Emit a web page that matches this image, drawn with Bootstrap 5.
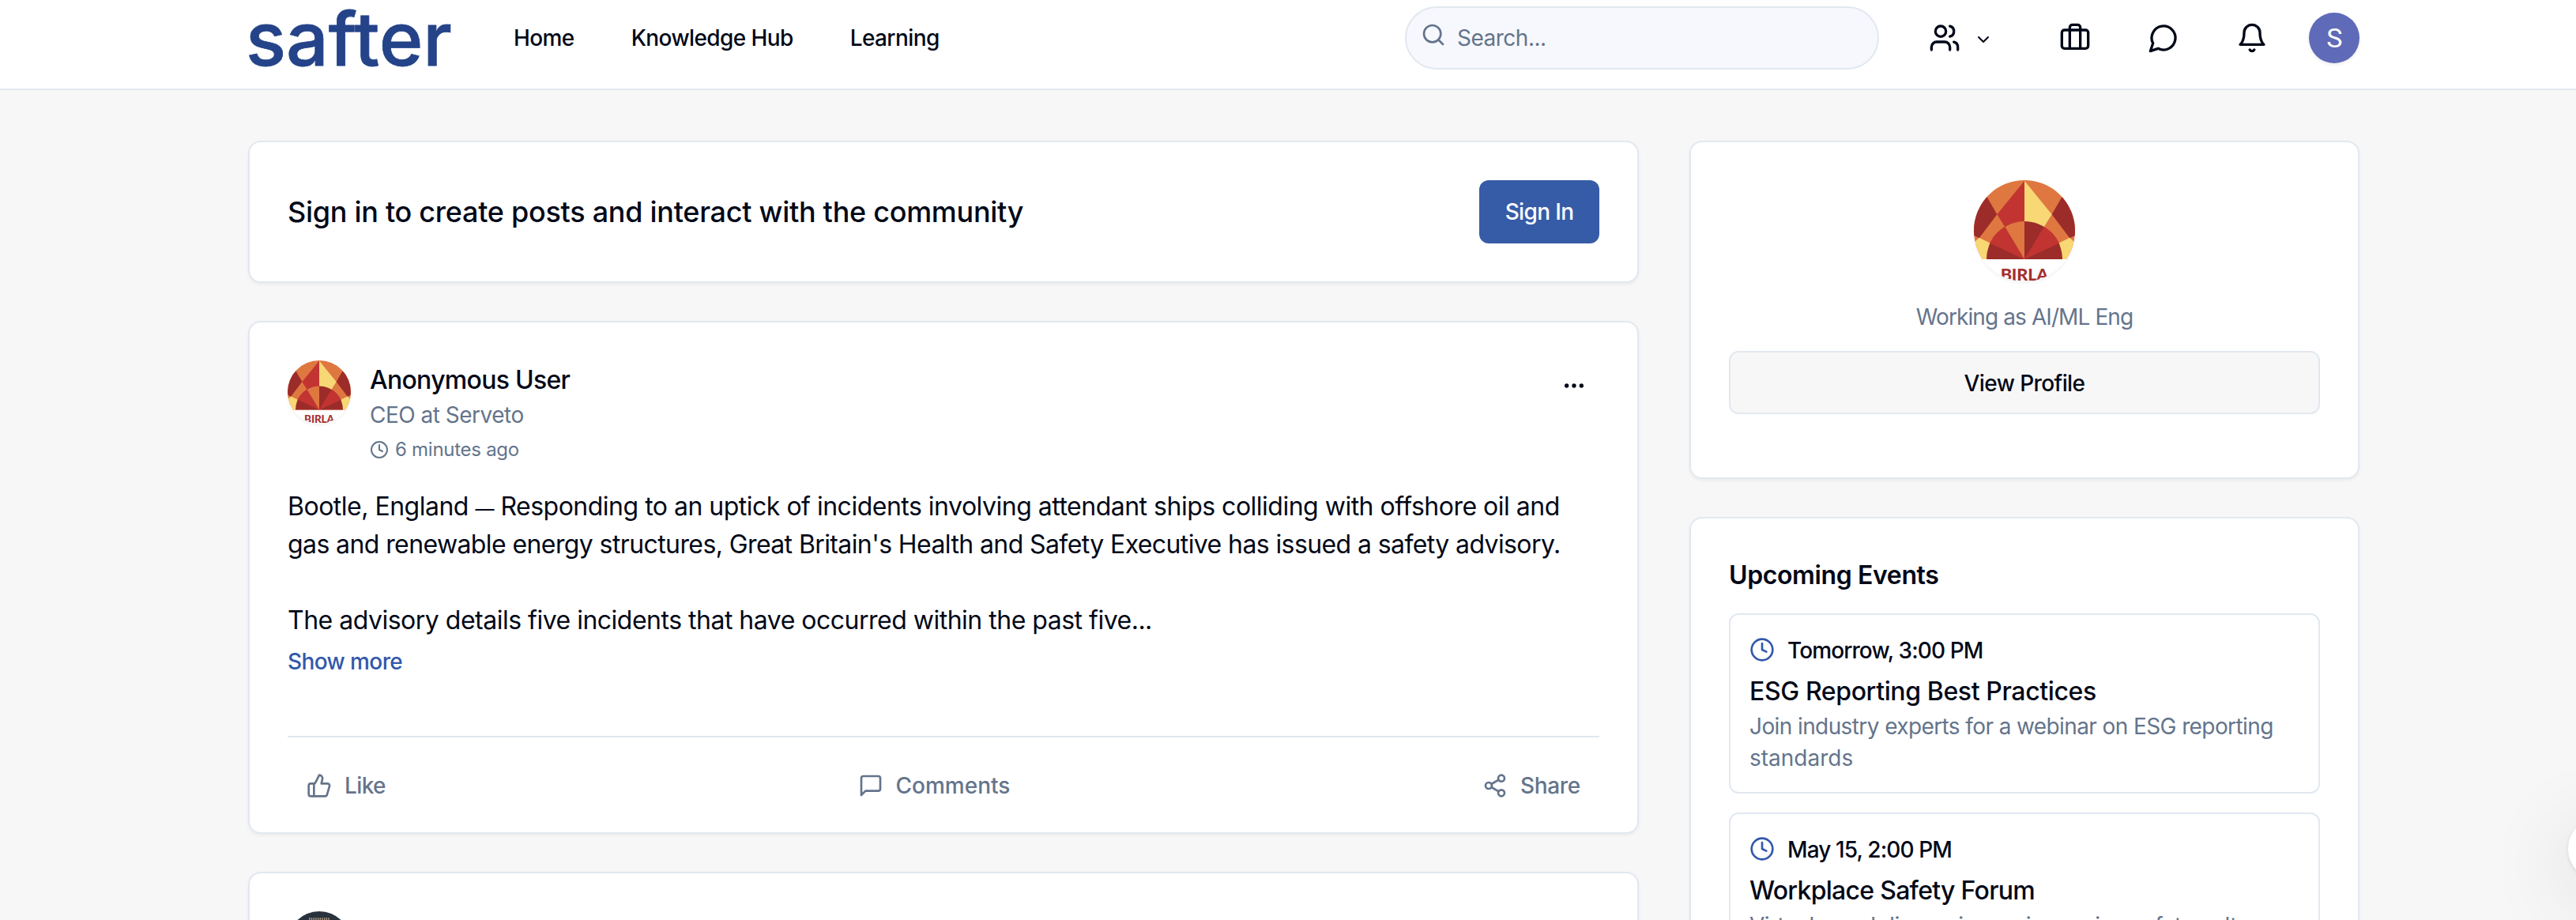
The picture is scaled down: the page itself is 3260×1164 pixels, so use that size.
<!DOCTYPE html>
<html lang="en">
<head>
<meta charset="utf-8">
<meta name="viewport" content="width=device-width, initial-scale=1">
<title>Safter</title>
<link href="https://cdn.jsdelivr.net/npm/bootstrap@5.3.0/dist/css/bootstrap.min.css" rel="stylesheet">
<style>
:root{--line:#e2e8f0;--ink:#020817;--soft:#64748b;--brand:#375ca7}
body{font-family:Inter,"Open Sans",sans-serif;background:#f7f7f7;color:var(--ink);font-size:28px;line-height:40px;letter-spacing:-.5px;height:1164px;overflow:hidden}
.page-pad{padding-left:314px;padding-right:274px}
.site-header{height:114px;border-bottom:2px solid var(--line);padding-bottom:16px}
.site-header a{color:var(--ink)}
.logo{width:256px;height:96px;margin-right:80px;overflow:visible}
.logo text{font-family:Inter,sans-serif;font-weight:500;font-size:94px;letter-spacing:0}
.site-links{gap:72px}
.search{width:600px;height:80px;border:2px solid var(--line);background:#f6f8fd;padding:0 18px;gap:14px;color:var(--soft);margin-right:32px}
.search svg{margin-top:-8px}
.head-actions{gap:32px}
.icon-btn{width:80px;height:80px}
.users-btn{width:144px;gap:17px;padding-left:31px}
.initial{width:64px;height:64px;background:#5f6ab8;color:#fff;font:400 34px/64px Roboto,sans-serif;text-align:center;box-shadow:0 2px 4px rgba(0,0,0,.08)}
.ico{fill:none;stroke:currentColor;stroke-width:2;stroke-linecap:round;stroke-linejoin:round;flex:none;display:block}
.main-area{padding-top:64px;gap:64px;height:1050px;overflow:hidden}
.feed{width:1760px}
.side{width:848px}
.feed,.side{gap:48px}
.panel{background:#fff;border:2px solid var(--line);border-radius:16px;padding:48px;box-shadow:0 2px 4px rgba(0,0,0,.05)}
.panel-signin{height:180px}
.panel-post{height:649px;padding-bottom:0}
.panel-profile{height:428px}
.t-36{font-size:36px;line-height:48px;letter-spacing:-.28px}
.t-32{font-size:32px;line-height:48px}
.t-24{font-size:24px;line-height:32px;letter-spacing:-.27px}
.ls-2{letter-spacing:-.3px}
.ls-3{letter-spacing:-.38px}
.ls-6{letter-spacing:-.6px}
.ls-7{letter-spacing:-.72px}
.ls-8{letter-spacing:-.9px}
.ls-none{letter-spacing:0}
.ls-up{letter-spacing:.2px}
.dash{font-size:24px;line-height:1}
.soft{color:var(--soft)}
.btn-sign{width:152px;height:80px;border-radius:12px;background:var(--brand);color:#fff;font-size:28px;font-weight:500;padding:0;border:0;line-height:40px;letter-spacing:-.65px}
.btn-view{height:80px;border-radius:12px;background:#f7f7f7;border:2px solid var(--line);color:var(--ink);font-size:28px;font-weight:500;padding:2px 0 0;letter-spacing:-.6px;margin-top:23px}
.working{margin-top:25px}
.emblem{border-radius:50%;box-shadow:0 2px 4px rgba(0,0,0,.06);flex:none;display:block}
.more-btn{width:64px;height:64px}
.who{padding-top:1px}
.post-body{margin-top:32px}
.show-more{margin-top:8px;color:#3258ab}
.post-actions{margin-top:74px;border-top:2px solid var(--line);height:122px;padding:2px 24px 0}
.post-actions span{gap:16px}
.dark-face{width:80px;height:80px}
.event{border:2px solid var(--line);border-radius:12px;padding:25px 24px 23px;margin-top:24px;height:228px}
.event h4{margin:8px 0 0;font-weight:500}
.clock-blue{color:#3258ab;margin-top:-2px}
.chat-bubble{left:3250px;top:1034px;width:80px;height:80px;background:#fff;box-shadow:0 2px 6px rgba(0,0,0,.1),0 20px 110px rgba(0,0,0,.16)}
</style>
</head>
<body>
<svg width="0" height="0" class="position-absolute" aria-hidden="true">
  <symbol id="birla" viewBox="54 54 384 384">
    <rect x="54" y="54" width="384" height="384" fill="#fff"/>
    <rect x="54" y="54" width="384" height="300" fill="#df7740"/>
    <path d="M104 118L142 184L74 274L50 262V118Z" fill="#9b2c2a"/>
    <path d="M388 118L350 184L418 274L442 262V118Z" fill="#9b2c2a"/>
    <path d="M74 272L114 292L104 354H50V296Z" fill="#f8d775"/>
    <path d="M418 272L378 292L388 354H442V296Z" fill="#f8d775"/>
    <path d="M246 56L142 184L172 232L246 210Z" fill="#c23431"/>
    <path d="M246 56L350 184L320 232L246 210Z" fill="#f8d775"/>
    <path d="M102 354A144 144 0 0 1 390 354Z" fill="#9b2c2a"/>
    <path d="M246 354L114 293A144 144 0 0 1 172 231Z" fill="#c23431"/>
    <path d="M246 354L172 231A144 144 0 0 1 246 210Z" fill="#df7740"/>
    <path d="M246 354L320 231A144 144 0 0 1 378 293Z" fill="#c23431"/>
    <text x="155" y="435" font-family="Lato,sans-serif" font-weight="900" font-size="62" textLength="182" lengthAdjust="spacingAndGlyphs" fill="#a52f30">BIRLA</text>
  </symbol>
  <symbol id="clock" viewBox="0 0 24 24"><circle cx="12" cy="12" r="10"/><path d="M12 6v6l4 2"/></symbol>
</svg>

<header class="site-header bg-white page-pad d-flex align-items-center">
  <a href="#" class="d-block text-decoration-none">
    <svg class="logo d-block" viewBox="0 0 256 96" role="img" aria-label="safter" fill="#244389" stroke="#244389" stroke-width=".8">
      <text x="-3" y="83" textLength="261" lengthAdjust="spacingAndGlyphs">safter</text>
    </svg>
  </a>
  <nav class="site-links d-flex fw-medium">
    <a href="#" class="text-decoration-none ls-6">Home</a>
    <a href="#" class="text-decoration-none ls-6">Knowledge Hub</a>
    <a href="#" class="text-decoration-none ls-6">Learning</a>
  </nav>
  <div class="search rounded-pill d-flex align-items-center ms-auto">
    <svg class="ico" width="32" height="32" viewBox="0 0 24 24"><circle cx="11" cy="11" r="8"/><path d="m21 21-4.3-4.3"/></svg>
    <span>Search...</span>
  </div>
  <div class="head-actions d-flex align-items-center">
    <a href="#" class="icon-btn users-btn d-flex align-items-center" aria-label="Network">
      <svg class="ico" width="40" height="40" viewBox="0 0 24 24"><path d="M16 21v-2a4 4 0 0 0-4-4H6a4 4 0 0 0-4 4v2"/><circle cx="9" cy="7" r="4"/><path d="M22 21v-2a4 4 0 0 0-3-3.87"/><path d="M16 3.13a4 4 0 0 1 0 7.75"/></svg>
      <svg class="ico mt-1" width="24" height="24" viewBox="0 0 24 24"><path d="m6 9 6 6 6-6"/></svg>
    </a>
    <a href="#" class="icon-btn d-flex align-items-center justify-content-center" aria-label="Jobs">
      <svg class="ico" width="40" height="40" viewBox="0 0 24 24"><path d="M16 20V4a2 2 0 0 0-2-2h-4a2 2 0 0 0-2 2v16"/><rect width="20" height="14" x="2" y="6" rx="2"/></svg>
    </a>
    <a href="#" class="icon-btn d-flex align-items-center justify-content-center" aria-label="Messages">
      <svg class="ico" width="40" height="40" viewBox="0 0 24 24"><path d="M7.9 20A9 9 0 1 0 4 16.1L2 22Z"/></svg>
    </a>
    <a href="#" class="icon-btn d-flex align-items-center justify-content-center" aria-label="Notifications">
      <svg class="ico" width="40" height="40" viewBox="0 0 24 24"><path d="M6 8a6 6 0 0 1 12 0c0 7 3 9 3 9H3s3-2 3-9"/><path d="M10.3 21a1.94 1.94 0 0 0 3.4 0"/></svg>
    </a>
    <div class="initial rounded-circle">S</div>
  </div>
</header>

<main class="main-area page-pad d-flex align-items-start">
  <div class="feed d-flex flex-column">
    <section class="panel panel-signin d-flex align-items-center justify-content-between">
      <h2 class="t-36 fw-medium mb-0">Sign in to create posts and interact with the community</h2>
      <button class="btn btn-sign">Sign In</button>
    </section>

    <article class="panel panel-post">
      <div class="d-flex">
        <svg class="emblem" width="80" height="80"><use href="#birla"/></svg>
        <div class="who flex-grow-1 ps-4">
          <div class="t-32 fw-medium ls-7">Anonymous User</div>
          <div class="soft">CEO at Serveto</div>
          <div class="t-24 soft d-flex align-items-center gap-2 mt-2">
            <svg class="ico" width="24" height="24"><use href="#clock"/></svg>6 minutes ago
          </div>
        </div>
        <div class="more-btn d-flex align-items-center justify-content-center">
          <svg class="ico" width="32" height="32" viewBox="0 0 24 24"><circle cx="12" cy="12" r="1"/><circle cx="19" cy="12" r="1"/><circle cx="5" cy="12" r="1"/></svg>
        </div>
      </div>
      <div class="post-body t-32 text-nowrap">
        <div>Bootle, England <span class="dash">—</span> Responding to an uptick of incidents involving attendant ships colliding with offshore oil and</div>
        <div class="ls-6">gas and renewable energy structures, Great Britain's Health and Safety Executive has issued a safety advisory.</div>
        <br>
        <div>The advisory details five incidents that have occurred within the past five...</div>
      </div>
      <div class="show-more fw-medium ls-6">Show more</div>
      <div class="post-actions soft fw-medium d-flex align-items-center justify-content-between">
        <span class="d-flex align-items-center ls-6">
          <svg class="ico" width="32" height="32" viewBox="0 0 24 24"><path d="M7 10v12"/><path d="M15 5.88 14 10h5.83a2 2 0 0 1 1.92 2.56l-2.33 8A2 2 0 0 1 17.5 22H4a2 2 0 0 1-2-2v-8a2 2 0 0 1 2-2h2.76a2 2 0 0 0 1.79-1.11L12 2a3.13 3.13 0 0 1 3 3.88Z"/></svg>Like</span>
        <span class="d-flex align-items-center ls-none">
          <svg class="ico" width="32" height="32" viewBox="0 0 24 24"><path d="M21 15a2 2 0 0 1-2 2H7l-4 4V5a2 2 0 0 1 2-2h14a2 2 0 0 1 2 2z"/></svg>Comments</span>
        <span class="d-flex align-items-center ls-2">
          <svg class="ico" width="32" height="32" viewBox="0 0 24 24"><circle cx="18" cy="5" r="3"/><circle cx="6" cy="12" r="3"/><circle cx="18" cy="19" r="3"/><path d="M8.59 13.51l6.83 3.98M15.41 6.51l-6.82 3.98"/></svg>Share</span>
      </div>
    </article>

    <article class="panel">
      <svg class="dark-face rounded-circle d-block" viewBox="0 0 80 80">
        <rect width="80" height="80" fill="#2a323d"/>
        <path d="M27 10h26" stroke="#c9b18c" stroke-width="4" stroke-dasharray="1.5 1.2" opacity=".75"/>
        <path d="M40 14v14" stroke="#e8d3ae" stroke-width="1.6"/>
      </svg>
    </article>
  </div>

  <aside class="side d-flex flex-column">
    <section class="panel panel-profile text-center">
      <svg class="emblem mx-auto" width="128" height="128"><use href="#birla"/></svg>
      <div class="working soft ls-8">Working as AI/ML Eng</div>
      <button class="btn btn-view w-100 d-block">View Profile</button>
    </section>

    <section class="panel">
      <h3 class="t-32 fw-semibold mb-0 ls-3">Upcoming Events</h3>
      <div class="event">
        <div class="d-flex align-items-center gap-3 fw-medium ls-8">
          <svg class="ico clock-blue" width="32" height="32"><use href="#clock"/></svg>Tomorrow, 3:00 PM
        </div>
        <h4 class="t-32 ls-3">ESG Reporting Best Practices</h4>
        <div class="soft ls-6">Join industry experts for a webinar on ESG reporting<br><span class="ls-none">standards</span></div>
      </div>
      <div class="event">
        <div class="d-flex align-items-center gap-3 fw-medium ls-8">
          <svg class="ico clock-blue" width="32" height="32"><use href="#clock"/></svg>May 15, 2:00 PM
        </div>
        <h4 class="t-32 ls-7">Workplace Safety Forum</h4>
        <div class="soft">Virtual panel discussion on improving safety culture</div>
      </div>
    </section>
  </aside>
</main>

<div class="chat-bubble position-fixed rounded-circle"></div>
<script src="https://cdn.jsdelivr.net/npm/bootstrap@5.3.0/dist/js/bootstrap.bundle.min.js"></script>
</body>
</html>
